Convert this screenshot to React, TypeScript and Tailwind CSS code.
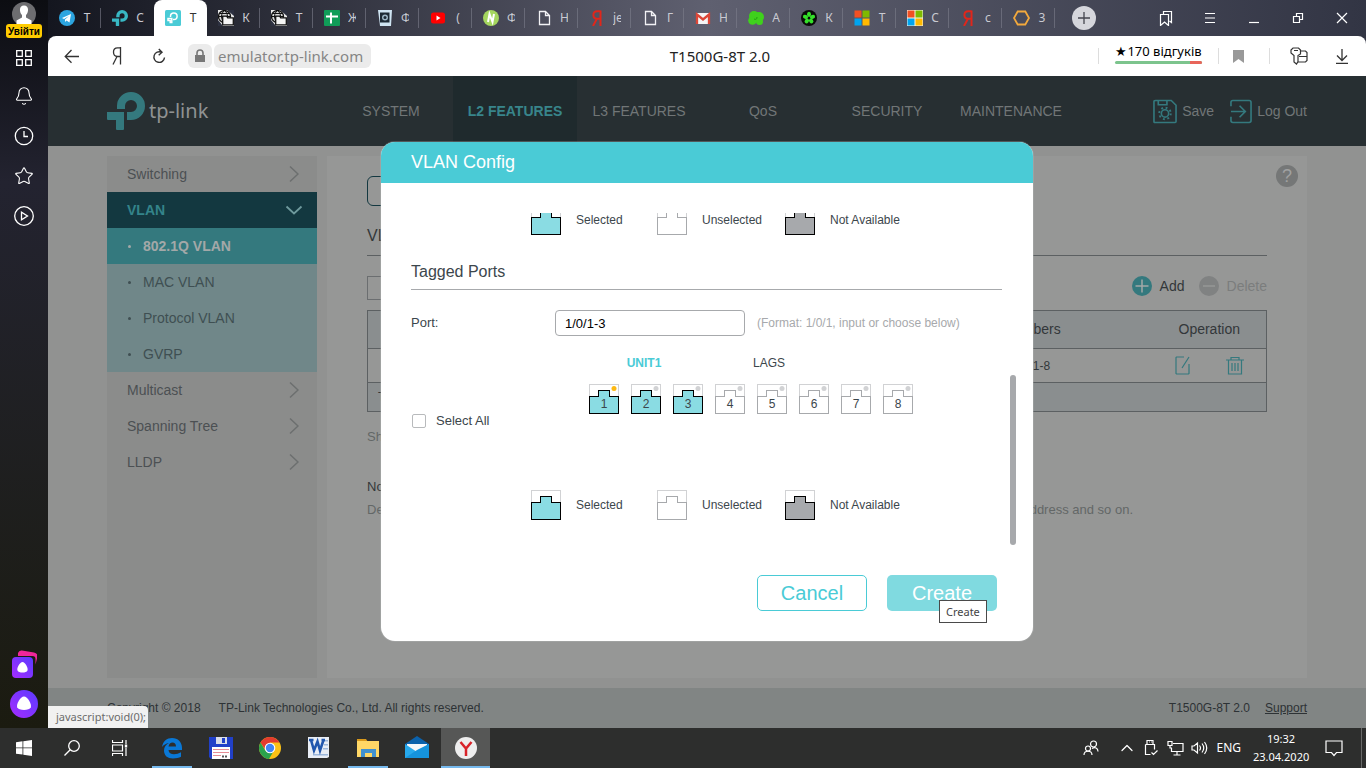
import React from "react";
import { Bell, ChevronUp, Search, Star } from "lucide-react";

type Kids = { children: React.ReactNode };

/* ---------- Browser tab strip ---------- */

const Ya = () => (
  <svg width="16" height="16" viewBox="0 0 16 16" fill="none" stroke="#e0261b" strokeWidth="2">
    <path d="M11.5 0.5V16M11.5 1.3H8.2C5.6 1.3 4.4 3 4.4 5s1.2 3.8 3.6 3.8h3.5M7.8 9L4 16" />
  </svg>
);
const Page = () => (
  <svg width="16" height="16" viewBox="0 0 16 16" fill="none" stroke="#f2f2f5" strokeWidth="1.3">
    <path d="M3.500 1.500h6l4 4v9h-10zM9.500 1.500v4h4" />
  </svg>
);
const Globe = () => (
  <svg width="16" height="16" viewBox="0 0 16 16">
    <rect width="16" height="16" fill="#e8e8e8" />
    <path d="M9 0h7v6z" fill="#2c3040" />
    <path d="M0 10v6h5z" fill="#2c3040" />
    <circle cx="6.500" cy="6.500" r="6" fill="#d8d8d8" stroke="#111" strokeWidth="1.300" />
    <path d="M0.500 6.500h12M6.500 .5c-4 3-4 9 0 12M6.500 .5c4 3 4 9 0 12M1.500 3.500h10" fill="none" stroke="#111" />
    <path d="M4.700 6.200h4l1 1.600h5.600v7H4.700z" fill="#f4f4f4" stroke="#111" strokeWidth="1.300" />
  </svg>
);
const TpMark = ({ color }: { color: string }) => (
  <svg width="16" height="16" viewBox="0 0 38 38" fill={color}>
    <path d="M0 20h17v17q0 1-1 1h-6q-1 0-1-1v-9H1q-1 0-1-1zM10 17V14a14 14 0 1 1 14 14h-4v-8h4a6 6 0 1 0-6-6v3z" />
  </svg>
);
const TpBox = () => (
  <svg width="16" height="16" viewBox="0 0 16 16">
    <rect width="16" height="16" rx="1.500" fill="#4acbd6" />
    <path d="M3 8.500h3.800v4H5.200v-2H3zM5.500 7V6.300a3.300 3.300 0 1 1 3.300 3.300H8" fill="none" stroke="#fff" strokeWidth="1.500" />
  </svg>
);
const MsLogo = () => (
  <svg width="16" height="16" viewBox="0 0 16 16">
    <path d="M.5.5h7v7h-7z" fill="#f25022" />
    <path d="M8.500.5h7v7h-7z" fill="#7fba00" />
    <path d="M.5 8.500h7v7h-7z" fill="#00a4ef" />
    <path d="M8.500 8.500h7v7h-7z" fill="#ffb900" />
  </svg>
);

const tabs: { title: string; icon: React.ReactNode; active?: boolean }[] = [
  {
    title: "Т",
    icon: (
      <svg width="16" height="16" viewBox="0 0 16 16">
        <circle cx="8" cy="8" r="8" fill="#2ca5e0" />
        <path d="M3 8l9-4-1.500 8.500-3-2-1.500 1.500v-2.500l4-3.500-5 3z" fill="#fff" />
      </svg>
    ),
  },
  { title: "С", icon: <TpMark color="#38b8c4" /> },
  { title: "T", icon: <TpBox />, active: true },
  { title: "К", icon: <Globe /> },
  { title: "Т", icon: <Globe /> },
  {
    title: "Ж",
    icon: (
      <svg width="16" height="16" viewBox="0 0 16 16">
        <rect width="16" height="16" rx="1" fill="#109d58" />
        <path d="M7 2.500v11M2 6.500h12" stroke="#fff" strokeWidth="2" />
      </svg>
    ),
  },
  {
    title: "Ф",
    icon: (
      <svg width="16" height="16" viewBox="0 0 16 16">
        <path d="M1 0h14l-1 16H3z" fill="#cfe4f2" />
        <rect x="3" y="2.500" width="9.500" height="10" fill="#1d2a35" />
        <circle cx="8" cy="7.500" r="3" fill="#9db6c6" />
        <circle cx="8" cy="7.500" r="1.500" fill="#1d2a35" />
      </svg>
    ),
  },
  {
    title: "(",
    icon: (
      <svg width="16" height="16" viewBox="0 0 16 16">
        <rect x="1" y="2.500" width="14" height="11" rx="2.500" fill="#f00" />
        <path d="M6.500 5.500l4 2.500-4 2.500z" fill="#fff" />
      </svg>
    ),
  },
  {
    title: "Ф",
    icon: (
      <svg width="16" height="16" viewBox="0 0 16 16">
        <circle cx="8" cy="8" r="8" fill="#a4d65e" />
        <path d="M5 12l1.500-8 3 8L11 4" fill="none" stroke="#fff" strokeWidth="2" />
      </svg>
    ),
  },
  { title: "Н", icon: <Page /> },
  { title: "je", icon: <Ya /> },
  { title: "Г", icon: <Page /> },
  {
    title: "Н",
    icon: (
      <svg width="16" height="16" viewBox="0 0 16 16">
        <rect x="1" y="3" width="14" height="11" rx="1" fill="#f5f5f5" />
        <path d="M2 14V4.500l6 5 6-5V14" fill="none" stroke="#dc4637" strokeWidth="2.300" />
      </svg>
    ),
  },
  {
    title: "А",
    icon: (
      <svg width="16" height="16" viewBox="0 0 16 16" fill="#3fd11c">
        <circle cx="6" cy="6" r="5" />
        <circle cx="11" cy="7" r="5" />
        <circle cx="4.500" cy="10.500" r="4.300" />
        <circle cx="11.500" cy="11.500" r="3.500" />
        <path d="M6 9c2 1 3 0 3-2" stroke="#22a010" fill="none" />
      </svg>
    ),
  },
  {
    title: "К",
    icon: (
      <svg width="16" height="16" viewBox="0 0 16 16">
        <circle cx="8" cy="8" r="8" fill="#0a0a0a" />
        <g fill="#35e02a">
          <ellipse cx="8" cy="4.300" rx="2" ry="2.600" />
          <ellipse cx="8" cy="4.300" rx="2" ry="2.600" transform="rotate(72 8 8)" />
          <ellipse cx="8" cy="4.300" rx="2" ry="2.600" transform="rotate(144 8 8)" />
          <ellipse cx="8" cy="4.300" rx="2" ry="2.600" transform="rotate(216 8 8)" />
          <ellipse cx="8" cy="4.300" rx="2" ry="2.600" transform="rotate(288 8 8)" />
        </g>
      </svg>
    ),
  },
  { title: "T", icon: <MsLogo /> },
  { title: "C", icon: <span className="bg-[#f4f4e8]"><MsLogo /></span> },
  { title: "с", icon: <Ya /> },
  {
    title: "3",
    icon: (
      <svg width="17" height="16" viewBox="0 0 17 16" fill="none" stroke="#f3a93c" strokeWidth="1.800">
        <path d="M4.700 1.500h7.600L16 8l-3.700 6.500H4.700L1 8z" />
      </svg>
    ),
  },
];

function TabStrip() {
  return (
    <div className="flex h-9 items-center">
      {tabs.map((t, i) => (
        <button
          key={i}
          type="button"
          className={
            t.active
              ? "flex h-9 w-[53px] items-center rounded-t-lg bg-white pl-[11px] text-[#333]"
              : "flex h-9 w-[53px] items-center pl-[11px] text-[#c9cad2]"
          }
        >
          {t.icon}
          <span className="ml-2 w-2 overflow-hidden whitespace-nowrap text-[12px] leading-5">{t.title}</span>
          {!t.active && i !== 1 && <span className="ml-auto h-5 w-px bg-[#7d7f8c]/60" />}
        </button>
      ))}
      <button type="button" aria-label="New tab" className="ml-[17px] flex size-6 items-center justify-center rounded-full bg-[#d5d6dc]">
        <svg width="14" height="14" viewBox="0 0 14 14" stroke="#44464f" strokeWidth="1.300">
          <path d="M7 1v12M1 7h12" />
        </svg>
      </button>
      <div className="ml-auto mr-[2px] flex text-white">
        {[
          <path d="M5.500 4V1.500h8v11l-2-1.500M2.500 4.500h8v11l-4-3.500-4 3.500z" />,
          <path d="M3 3.500h10M3 8h10M3 12.500h10" />,
          <path d="M3 12.500h10" />,
          <path d="M3.500 6.500h6v6h-6zM6.500 6.500v-3h6v6h-3" />,
          <path d="M3 3l10 10M13 3L3 13" />,
        ].map((p, i) => (
          <button key={i} type="button" aria-label="Window control" className="flex w-11 justify-center">
            <svg width="16" height="16" viewBox="0 0 16 16" fill="none" stroke="currentColor" strokeWidth="1.200">
              {p}
            </svg>
          </button>
        ))}
      </div>
    </div>
  );
}

function AddressBar() {
  return (
    <div className="flex h-10 items-center rounded-t-lg bg-white text-[#333]">
      <div className="flex w-[338px] items-center">
        <button type="button" aria-label="Back" className="ml-4">
          <svg width="16" height="16" viewBox="0 0 16 16" fill="none" stroke="currentColor" strokeWidth="1.300">
            <path d="M15 8.500H1.500M7.500 2L1.200 8.500l6.300 6.300" />
          </svg>
        </button>
        <button type="button" aria-label="Yandex" className="ml-7">
          <svg width="18" height="18" viewBox="0 0 18 18" fill="none" stroke="currentColor" strokeWidth="1.300">
            <path d="M12.500 0v17.500M12.500.8H9.500C6.800.8 5.500 2.600 5.500 5s1.300 4.500 4 4.500h3M9 9.500L5 17.500" />
          </svg>
        </button>
        <button type="button" aria-label="Reload" className="ml-6">
          <svg width="18" height="18" viewBox="0 0 18 18" fill="none" stroke="currentColor" strokeWidth="1.400">
            <path d="M14.500 10.500a5.300 5.300 0 1 1-3-5.200M8.800 2l3.200 3.300-3.300 3" />
          </svg>
        </button>
        <span className="ml-[20px] flex size-6 items-center justify-center rounded-md bg-[#ebebeb]">
          <svg width="12" height="14" viewBox="0 0 12 14">
            <path d="M1 6h10v7H1z" fill="#777" />
            <path d="M3 6V4a3 3 0 0 1 6 0v2" fill="none" stroke="#777" strokeWidth="1.600" />
          </svg>
        </span>
        <a
          href="#address"
          className="ml-[2px] rounded-md bg-[#ebebeb] pr-2 pl-1 text-[15px] leading-6 whitespace-nowrap text-[#858585]"
        >
          emulator.tp-link.com
        </a>
      </div>
      <div className="flex-1 text-center text-[15px] text-[#222]">T1500G-8T 2.0</div>
      <div className="flex w-[312px] items-center">
        <span className="ml-[44px] h-4 w-px bg-[#ddd]" />
        <div className="mb-[6px] ml-4 w-[87px]">
          <div className="text-center text-[13px] leading-[19px] whitespace-nowrap text-black">★170 відгуків</div>
          <div className="flex h-[3px] overflow-hidden rounded-full bg-[#7cc48d]">
            <span className="ml-auto w-3 bg-[#e8655a]" />
          </div>
        </div>
        <span className="ml-4 h-4 w-px bg-[#ddd]" />
        <svg className="ml-[14px]" width="11" height="13" viewBox="0 0 11 13" fill="#999">
          <path d="M0 0h11v13L5.500 9 0 13z" />
        </svg>
        <span className="ml-[25px] h-4 w-px bg-[#ddd]" />
        <svg className="ml-5" width="18" height="18" viewBox="0 0 18 18" fill="none" stroke="currentColor" strokeWidth="1.200">
          <path d="M3 1h5.500l2 2v4L8 8.500v6L6.500 17 4 15V8.500L1 6V3zM4 3.500h4" />
          <path d="M10.500 4h5l1.500 1.500v8L15.500 15H8M9 9.500h8" />
        </svg>
        <svg className="ml-[27px]" width="14" height="16" viewBox="0 0 14 16" fill="none" stroke="currentColor" strokeWidth="1.300">
          <path d="M7 1v11M2 7.500l5 5 5-5M1 15.300h12" />
        </svg>
      </div>
    </div>
  );
}

function BrowserSidebar() {
  return (
    <aside className="flex w-12 flex-col items-center bg-linear-to-b from-[#0c0d12] via-[#232330] via-25% to-[#1b1b10] text-white">
      <div className="mt-[2px] h-[22px] overflow-hidden">
        <svg width="24" height="24" viewBox="0 0 24 24">
          <circle cx="12" cy="12" r="12" fill="#6d6d70" />
          <path d="M12 3.500c3 0 4.300 2.300 4 5-.2 2-1 3.500-2 4.500v2.500l5.500 3V24h-15v-5.500l5.500-3V13c-1-1-1.800-2.500-2-4.500-.3-2.700 1-5 4-5z" fill="#fff" />
        </svg>
      </div>
      <button type="button" className="h-[14px] w-9 rounded-[3px] bg-[#fc0] text-[10px] leading-[13px] font-semibold text-black">
        Увійти
      </button>
      <svg className="mt-3" width="16" height="16" viewBox="0 0 16 16" fill="none" stroke="currentColor" strokeWidth="1.300">
        <path d="M.7.7h5.600v5.600H.7zM9.700.7h5.600v5.600H9.700zM.7 9.700h5.600v5.600H.7zM9.700 9.700h5.600v5.600H9.700z" />
      </svg>
      <Bell className="mt-5" size={20} strokeWidth={1.300} />
      <svg className="mt-5" width="20" height="20" viewBox="0 0 20 20" fill="none" stroke="currentColor" strokeWidth="1.300">
        <circle cx="10" cy="10" r="8.700" />
        <path d="M10 5v5.500h4" />
      </svg>
      <Star className="mt-5" size={20} strokeWidth={1.300} />
      <svg className="mt-5" width="20" height="20" viewBox="0 0 20 20" fill="none" stroke="currentColor" strokeWidth="1.300">
        <circle cx="10" cy="10" r="9.300" />
        <path d="M7.500 6.200v7.600L13.500 10z" />
      </svg>
      <svg className="mt-auto" width="26" height="28" viewBox="-1 0 26 28">
        <defs>
          <linearGradient id="alice" x1="0" y1="1" x2="1" y2="0">
            <stop offset="0" stopColor="#a62cff" />
            <stop offset="1" stopColor="#5a3bff" />
          </linearGradient>
        </defs>
        <path d="M6 3Q7 0 10 .5l12 2q4 1 3.500 4l-2 8V9q0-3-3-3H6z" fill="#f0269a" />
        <rect y="7" width="21" height="21" rx="4" fill="url(#alice)" />
        <path d="M10.500 12c2.500 0 6 6 5 8.500-1 2.700-9 2.700-10 0-1-2.500 2.500-8.500 5-8.500z" fill="#fff" />
      </svg>
      <svg className="mt-3 mb-[10px]" width="28" height="28" viewBox="0 0 28 28">
        <circle cx="14" cy="14" r="14" fill="url(#alice)" />
        <path d="M14 6.500c3.500 0 8 7.500 6.800 10.800-1.300 3.500-12.300 3.500-13.600 0C6 14 10.500 6.500 14 6.500z" fill="#fff" />
      </svg>
    </aside>
  );
}

/* ---------- Switch web interface ---------- */

const nav = ["SYSTEM", "L2 FEATURES", "L3 FEATURES", "QoS", "SECURITY", "MAINTENANCE"];

function SiteHeader() {
  return (
    <header className="bg-[#272f32]">
      <div className="mx-auto flex h-[70px] w-full max-w-[1200px] text-[14px] text-[#717677]">
        <a href="#home" aria-label="tp-link" className="flex w-[222px] items-center text-[#34797e]">
          <svg width="38" height="38" viewBox="0 0 38 38" fill="currentColor">
            <path d="M0 20h17v17q0 1-1 1h-6q-1 0-1-1v-9H1q-1 0-1-1zM10 17V14a14 14 0 1 1 14 14h-4v-8h4a6 6 0 1 0-6-6v3z" />
          </svg>
          <span className="ml-1 font-['Noto_Sans',sans-serif] text-[20px] text-[#8f9292]">tp-link</span>
        </a>
        <nav className="flex">
          {nav.map((n) => (
            <a
              key={n}
              href="#nav"
              className={
                n === "L2 FEATURES"
                  ? "flex w-[124px] items-center justify-center border-t-4 border-b-4 border-t-[#1f2a2d] border-b-[#34797e] bg-[#1f2a2d] font-bold text-[#38858b]"
                  : "flex w-[124px] items-center justify-center"
              }
            >
              {n}
            </a>
          ))}
        </nav>
        <div className="ml-auto flex items-center">
          <button type="button" className="flex items-center gap-[5px]">
            <svg width="24" height="25" viewBox="0 0 25 25" fill="none" stroke="#34797e" strokeWidth="1.700">
              <path d="M3 1h16l5 5v17q0 1-1 1H2q-1 0-1-1V2q0-1 2-1zM5.500 1v4.500h9V1" />
              <circle cx="12.500" cy="14.500" r="3.800" />
              <circle cx="12.500" cy="14.500" r="6" strokeDasharray="2 2.700" strokeWidth="2" />
            </svg>
            Save
          </button>
          <button type="button" className="ml-4 flex items-center gap-[5px]">
            <svg width="22" height="25" viewBox="0 0 23 25" fill="none" stroke="#34797e" strokeWidth="1.700">
              <path d="M1 7V3q0-2 2-2h17q2 0 2 2v19q0 2-2 2H3q-2 0-2-2v-4M1 12.500h15M10 6.500l6 6-6 6" />
            </svg>
            Log Out
          </button>
        </div>
      </div>
    </header>
  );
}

const menu: { label: string; kind: "top" | "open" | "active" | "sub" }[] = [
  { label: "Switching", kind: "top" },
  { label: "VLAN", kind: "open" },
  { label: "802.1Q VLAN", kind: "active" },
  { label: "MAC VLAN", kind: "sub" },
  { label: "Protocol VLAN", kind: "sub" },
  { label: "GVRP", kind: "sub" },
  { label: "Multicast", kind: "top" },
  { label: "Spanning Tree", kind: "top" },
  { label: "LLDP", kind: "top" },
];
const menuStyle = {
  top: "pr-[18px] text-[#4c5053]",
  open: "pr-[14px] bg-[#133840] font-bold text-[#34848a]",
  active: "bg-[#34797e] font-bold text-[#a3a8a8]",
  sub: "bg-[#708789] text-[#3f4f52]",
};

function SideMenu() {
  return (
    <nav className="w-[210px] shrink-0 bg-[#8b8c8b] text-[14px]">
      {menu.map((m) => (
        <a key={m.label} href="#menu" className={"flex h-9 items-center pl-5 " + menuStyle[m.kind]}>
          {(m.kind === "sub" || m.kind === "active") && <span className="mr-3 ml-px size-[3px] rounded-full bg-current" />}
          {m.label}
          {m.kind === "top" && (
            <svg className="ml-auto" width="10" height="18" viewBox="0 0 10 18" fill="none" stroke="#6c6f6f" strokeWidth="1.500">
              <path d="M1 1.500L9 9l-8 7.500" />
            </svg>
          )}
          {m.kind === "open" && (
            <svg className="ml-auto" width="18" height="10" viewBox="0 0 18 10" fill="none" stroke="#6f9a9d" strokeWidth="1.800">
              <path d="M1.500 1.500L9 8.500l7.500-7" />
            </svg>
          )}
        </a>
      ))}
    </nav>
  );
}

const cell = "border-y border-[#5c6062]";

function VlanPanel() {
  return (
    <main className="relative flex-1 bg-[#969796] px-10 pt-[20px] text-[#33373a]">
      <button
        type="button"
        aria-label="Help"
        className="absolute top-[9px] right-[9px] size-[22px] rounded-full bg-[#757777] text-[18px] leading-[22px] text-[#a0a1a1]"
      >
        ?
      </button>
      <button type="button" aria-label="802.1Q VLAN" className="block h-[30px] w-[130px] rounded-md border border-[#133840]" />
      <h2 className="mt-[10px] border-b border-[#5c6062] text-[16px] leading-[39px]">VLAN Config</h2>
      <div className="mt-5 flex h-6 items-start text-[14px]">
        <input aria-label="Search VLAN" className="h-6 w-[190px] border border-[#6b6e70]" />
        <button type="button" className="ml-auto flex items-center gap-2 leading-5">
          <svg width="20" height="20" viewBox="0 0 20 20">
            <circle cx="10" cy="10" r="10" fill="#34797e" />
            <path d="M10 3.500v13M3.500 10h13" stroke="#a3a8a8" strokeWidth="1.500" />
          </svg>
          Add
        </button>
        <button type="button" className="ml-[14px] flex items-center gap-2 leading-5 text-[#7b7d7d]">
          <svg width="20" height="20" viewBox="0 0 20 20">
            <circle cx="10" cy="10" r="10" fill="#808282" />
            <path d="M4 10h12" stroke="#969796" strokeWidth="1.500" />
          </svg>
          Delete
        </button>
      </div>
      <table className="mt-[10px] w-full table-fixed border-collapse border border-[#5c6062] text-center text-[14px]">
        <thead>
          <tr className="h-[38px] bg-[#8a8e8f]">
            <th className={cell + " font-normal"} />
            <th className={cell + " w-[242px] font-normal"}>Members</th>
            <th className={cell + " w-[114px] font-normal"}>Operation</th>
          </tr>
        </thead>
        <tbody>
          <tr className="h-[34px] text-[12px]">
            <td className={cell} />
            <td className={cell}>1/0/1-8</td>
            <td className={cell}>
              <div className="flex justify-center gap-9 text-[#34797e]">
                <button type="button" aria-label="Edit">
                  <svg width="15" height="19" viewBox="0 0 15 19" fill="none" stroke="currentColor" strokeWidth="1.200">
                    <path d="M9 1H1.500L1 1.500v16l.5.5h12l.5-.5V8M14 1L7 12" />
                  </svg>
                </button>
                <button type="button" aria-label="Remove">
                  <svg width="18" height="19" viewBox="0 0 18 19" fill="none" stroke="currentColor" strokeWidth="1.200">
                    <path d="M0 4h18M5 4V1.500h8V4M2.500 4v14h13V4M6 7v8M9 7v8M12 7v8" />
                  </svg>
                </button>
              </div>
            </td>
          </tr>
          <tr className="h-[29px] bg-[#8a8e8f] text-left text-[13px]">
            <td className="pl-[10px]" colSpan={3}>Total: 1</td>
          </tr>
        </tbody>
      </table>
      <p className="mt-[15px] text-[13px] leading-5 text-[#636767]">Showing</p>
      <h3 className="mt-[30px] text-[13px] leading-5">Note:</h3>
      <p className="mt-[3px] flex max-w-[766px] justify-between text-[13px] leading-5 text-[#636767]">
        <span>Default</span>
        <span>address and so on.</span>
      </p>
    </main>
  );
}

/* ---------- VLAN dialog ---------- */

type PortState = "selected" | "unselected" | "unavailable";
const portColors = {
  selected: { fill: "#8adce3", stroke: "#000" },
  unselected: { fill: "#fff", stroke: "#a7a9ac" },
  unavailable: { fill: "#a7a9ac", stroke: "#000" },
};

function PortShape({ state, led }: { state: PortState; led?: string }) {
  const c = portColors[state];
  return (
    <svg width="30" height="30" viewBox="0 0 30 30">
      <g shapeRendering="crispEdges">
        <path d="M.5 12V.5h29V12" fill="#fff" stroke="#d1d2d4" />
        <path d="M.5 12.500h9v-6h11v6h9v17H.5z" fill={c.fill} stroke={c.stroke} />
      </g>
      {led && <circle cx="25" cy="4.500" r="2.500" fill={led} />}
    </svg>
  );
}

function Legend() {
  const items: [PortState, string][] = [
    ["selected", "Selected"],
    ["unselected", "Unselected"],
    ["unavailable", "Not Available"],
  ];
  return (
    <div className="grid grid-cols-[126px_128px_1fr] pl-[120px] text-[12px]">
      {items.map(([state, label]) => (
        <div key={state} className="flex items-center gap-[15px] whitespace-nowrap">
          <PortShape state={state} />
          {label}
        </div>
      ))}
    </div>
  );
}

function VlanDialog() {
  return (
    <section
      role="dialog"
      aria-label="VLAN Config"
      className="w-[652px] overflow-hidden rounded-[14px] bg-white text-[13px] text-[#3c464c] ring-1 ring-[#b9bcbc]/30"
    >
      <h1 className="bg-[#4acbd6] px-[30px] text-[18px] leading-[41px] text-white">VLAN Config</h1>
      <div className="relative mt-[30px] pr-[31px] pl-[30px]">
        <div className="overflow-hidden pb-[25px]">
          <div className="-mt-2">
            <Legend />
          </div>
          <h2 className="mt-[19px] border-b border-[#a7a9ac] text-[16px] leading-[35px]">Tagged Ports</h2>
          <div className="mt-5 flex items-center">
            <label htmlFor="port" className="w-36">Port:</label>
            <input
              id="port"
              defaultValue="1/0/1-3"
              className="h-[26px] w-[190px] rounded-[4px] border border-[#a7a9ac] px-[9px] text-[13px] text-black"
            />
            <span className="ml-3 text-[12px] text-[#a7a9ac]">(Format: 1/0/1, input or choose below)</span>
          </div>
          <div className="mt-[17px] flex pl-[170px] text-[12px] leading-5">
            <button type="button" className="w-[126px] font-bold text-[#4acbd6]">UNIT1</button>
            <button type="button" className="w-[124px]">LAGS</button>
          </div>
          <div className="mt-[11px] flex min-h-[106px] items-start">
            <label className="mt-[27px] flex w-[178px] items-center gap-[10px] pl-px leading-5">
              <input type="checkbox" className="size-[14px] appearance-none rounded-[2px] border border-[#b8babc] bg-white" />
              Select All
            </label>
            <div className="flex gap-3">
              {[1, 2, 3, 4, 5, 6, 7, 8].map((n) => (
                <button key={n} type="button" className="relative size-[30px] text-[12px] leading-5">
                  <PortShape state={n <= 3 ? "selected" : "unselected"} led={n === 1 ? "#fdb913" : "#d1d2d4"} />
                  <span className="absolute inset-x-0 bottom-0">{n}</span>
                </button>
              ))}
            </div>
          </div>
          <Legend />
        </div>
        <div className="absolute right-[17px] bottom-0 h-[170px] w-[6px] rounded-full bg-[#a7a9ac]" />
      </div>
      <div className="flex justify-end gap-5 pt-[30px] pr-[36px] pb-[30px] text-[20px]">
        <button type="button" className="h-9 w-[110px] rounded-[5px] border border-[#4acbd6] text-[#4acbd6]">Cancel</button>
        <div className="relative">
          <button type="button" className="h-9 w-[110px] rounded-[5px] bg-[#80dae0] text-white">Create</button>
          <span
            role="tooltip"
            className="absolute top-[25px] left-[52px] border border-[#4a4a4a] bg-white px-[6px] font-['Noto_Sans',sans-serif] text-[11px] leading-[21px] text-[#444]"
          >
            Create
          </span>
        </div>
      </div>
    </section>
  );
}

/* ---------- Windows taskbar ---------- */

const apps: { name: string; state?: "running" | "focused"; icon: React.ReactNode }[] = [
  {
    name: "Edge",
    state: "running",
    icon: (
      <path d="M2 11C3 5 7 2 12 2c6 0 10 4 10 10v2H8.500c.2 3 2.500 4.300 5.500 4.300 2.500 0 5-.7 7-2v4.500C19 22 16 22.500 13 22.500 7.500 22.500 4 19.500 4 14.500 4 11 6 8.500 9 7 6 7.500 3.500 9 2 11zM8.500 10.500H16C16 8 14.500 6.500 12.500 6.500S9 8 8.500 10.500z" fill="#0a78d6" />
    ),
  },
  {
    name: "Total Commander",
    icon: (
      <>
        <path d="M0 1h24v22H2l-2-2z" fill="#2140c8" />
        <path d="M7 1h11v7H7z" fill="#d9dde8" />
        <path d="M13 2h3v5h-3z" fill="#2140c8" />
        <path d="M3 11h18v12H3z" fill="#fff" />
        <path d="M4 13.500h16M4 16.500h16M4 19.500h8" stroke="#e58c94" />
        <path d="M13 20.500h6" stroke="#555" strokeWidth="2" strokeDasharray="2 1" />
      </>
    ),
  },
  {
    name: "Chrome",
    icon: (
      <>
        <circle cx="12" cy="12" r="11" fill="#fbc116" />
        <path d="M2.500 6.500A11 11 0 0 1 21.500 6.500H12L7.500 14z" fill="#e33b2e" />
        <path d="M2.500 6.500A11 11 0 0 0 11 23l5-8.500-4 2.500-5-3z" fill="#2ba24c" />
        <circle cx="12" cy="12" r="5.300" fill="#fff" />
        <circle cx="12" cy="12" r="4.200" fill="#4285f4" />
      </>
    ),
  },
  {
    name: "Word",
    icon: (
      <>
        <path d="M1 1h21v20l-2 1H1z" fill="#e9eef6" />
        <path d="M17 4h4v1.500h-4zM17 8h4v1.500h-4zM16 12h5v1.500h-5zM6 18h15v1.500H6z" fill="#9db8dc" />
        <path d="M2 4h4.500M4 4l3 10.500L10.500 5.500 13 14.500 16.500 4M14.500 4H18" fill="none" stroke="#2157ae" strokeWidth="2.600" />
      </>
    ),
  },
  {
    name: "Explorer",
    state: "running",
    icon: (
      <>
        <path d="M1 3h9l2 3h-11z" fill="#d99a1c" />
        <path d="M1 5h22v16H1z" fill="#ffd766" />
        <path d="M5 13h15v8h-4v-4H9v4H5z" fill="#4191cf" />
      </>
    ),
  },
  {
    name: "Mail",
    icon: (
      <>
        <path d="M0 8l12-8 12 8v4H0z" fill="#0b62ac" />
        <path d="M2 8h20v10H2z" fill="#f5f7fa" />
        <path d="M0 8l12 8L24 8v14H0z" fill="#27a9ec" />
        <path d="M0 22l12-8L24 8v14z" fill="#1593dc" />
      </>
    ),
  },
  {
    name: "Yandex Browser",
    state: "focused",
    icon: (
      <>
        <circle cx="12" cy="12" r="11" fill="#eee" />
        <path d="M6.500 6l5.500 6.500L17.500 6M12 12v8" fill="none" stroke="#d8232a" strokeWidth="2.500" />
      </>
    ),
  },
];

const Slot = ({ children }: Kids) => (
  <button type="button" aria-label="System" className="flex h-10 w-12 items-center justify-center">
    {children}
  </button>
);

function Taskbar() {
  return (
    <footer className="flex h-10 items-center bg-[#2d2e2d] font-['Noto_Sans',sans-serif] text-[12px] text-white">
      <Slot>
        <svg width="16" height="16" viewBox="0 0 16 16" fill="#fff">
          <path d="M0 2.200L6.500 1.300v6.200H0zM7.300 1.200L16 0v7.500H7.300zM0 8.300h6.500v6.300L0 13.700zM7.300 8.300H16V16l-8.700-1.200z" />
        </svg>
      </Slot>
      <Slot>
        <svg width="16" height="16" viewBox="0 0 16 16" fill="none" stroke="#fff" strokeWidth="1.300">
          <circle cx="10" cy="6" r="5.300" />
          <path d="M6.200 9.800L.5 15.500" />
        </svg>
      </Slot>
      <Slot>
        <svg width="16" height="16" viewBox="0 0 16 16" fill="none" stroke="#fff" strokeWidth="1.200">
          <path d="M.5 0v2.500h10V0M.5 5h10v6H.5zM.5 16v-2.500h10V16M14 0v4M14 8v8" />
          <path d="M12.800 4.500h2.400v3h-2.400z" fill="#fff" stroke="none" />
        </svg>
      </Slot>
      <div className="ml-[3px] flex">
        {apps.map((a) => (
          <button
            key={a.name}
            type="button"
            aria-label={a.name}
            className={
              a.state === "focused"
                ? "flex h-10 w-[49px] flex-col items-center justify-between bg-[#565756] pt-2"
                : "flex h-10 w-[49px] flex-col items-center justify-between pt-2"
            }
          >
            <svg width="24" height="24" viewBox="0 0 24 24">{a.icon}</svg>
            {a.state === "running" && <span className="h-[2px] w-10 bg-[#76b9ed]" />}
            {a.state === "focused" && <span className="h-[2px] w-full bg-[#76b9ed]" />}
          </button>
        ))}
      </div>
      <div className="ml-auto flex items-center">
        <svg width="16" height="16" viewBox="0 0 16 16" fill="none" stroke="#fff" strokeWidth="1.200">
          <circle cx="10.500" cy="4" r="3" />
          <circle cx="5" cy="8.500" r="2.500" />
          <path d="M1 15c0-5 8-5 8 0M9 8.500c3-2 6-.5 6 3" />
        </svg>
        <ChevronUp className="ml-[18px]" size={20} strokeWidth={1.500} />
        <svg className="ml-[6px]" width="16" height="18" viewBox="0 0 16 18" fill="none" stroke="#fff" strokeWidth="1.200">
          <path d="M4 5V1.500h6V5M2.500 5.500h9v5M2.500 5.500v10h5M8.500 13.500l2 2 4-4M6 3h.8M8 3h.8" />
        </svg>
        <svg className="ml-2" width="17" height="16" viewBox="0 0 17 16" fill="none" stroke="#fff" strokeWidth="1.200">
          <path d="M6 3.500h10v8H4.500V8M1 1.500h4v4H1zM3 5.500V8h2M10 11.500V15M6.500 15h7" />
        </svg>
        <svg className="ml-[7px]" width="17" height="14" viewBox="0 0 17 14" fill="none" stroke="#fff" strokeWidth="1.200">
          <path d="M1 5v4h2l3.500 3V2L3 5zM8.500 4.500q2 2.500 0 5M11 2.500q3.500 4.500 0 9M13.500 1q4.500 6 0 12" />
        </svg>
        <span className="ml-2 text-[12px]">ENG</span>
        <div className="ml-3 w-[56px] text-center text-[11px] leading-[18px]">
          <div>19:32</div>
          <div>23.04.2020</div>
        </div>
        <svg className="ml-4" width="18" height="17" viewBox="0 0 18 17" fill="none" stroke="#fff" strokeWidth="1.200">
          <path d="M1 1h16v11.500h-5.500L9 15.500l-2.500-3H1z" />
        </svg>
        <span className="mr-1 ml-[18px] h-10 w-px bg-[#686968]" />
      </div>
    </footer>
  );
}

export default function App() {
  return (
    <div className="flex min-h-screen flex-col font-['Liberation_Sans',Arial,sans-serif]">
      <div className="flex flex-1">
        <BrowserSidebar />
        <div className="flex min-w-0 flex-1 flex-col">
          <div className="bg-linear-to-r from-[#14161f] via-[#5f6070] via-50% to-[#323544] font-['Noto_Sans',sans-serif]">
            <TabStrip />
            <AddressBar />
          </div>
          <div className="relative flex flex-1 flex-col bg-[#919291]">
            <SiteHeader />
            <div className="mx-auto flex w-full max-w-[1200px] flex-1 gap-[10px] py-[10px]">
              <SideMenu />
              <VlanPanel />
            </div>
            <div className="bg-[#818584] text-[12px] text-[#2d3235]">
              <div className="mx-auto flex h-10 w-full max-w-[1200px] items-center">
                <span>Copyright © 2018</span>
                <span className="ml-[18px]">TP-Link Technologies Co., Ltd. All rights reserved.</span>
                <span className="ml-auto">T1500G-8T 2.0</span>
                <a href="#support" className="ml-[15px] underline">Support</a>
              </div>
            </div>
            <div className="absolute inset-x-0 top-[66px] flex justify-center">
              <VlanDialog />
            </div>
            <div className="absolute bottom-0 left-0 rounded-tr-sm bg-[#f1f1f1] pr-[2px] pl-2 font-['Noto_Sans',sans-serif] text-[11px] leading-[22px] text-[#6b6b6b]">
              javascript:void(0);
            </div>
          </div>
        </div>
      </div>
      <Taskbar />
    </div>
  );
}
